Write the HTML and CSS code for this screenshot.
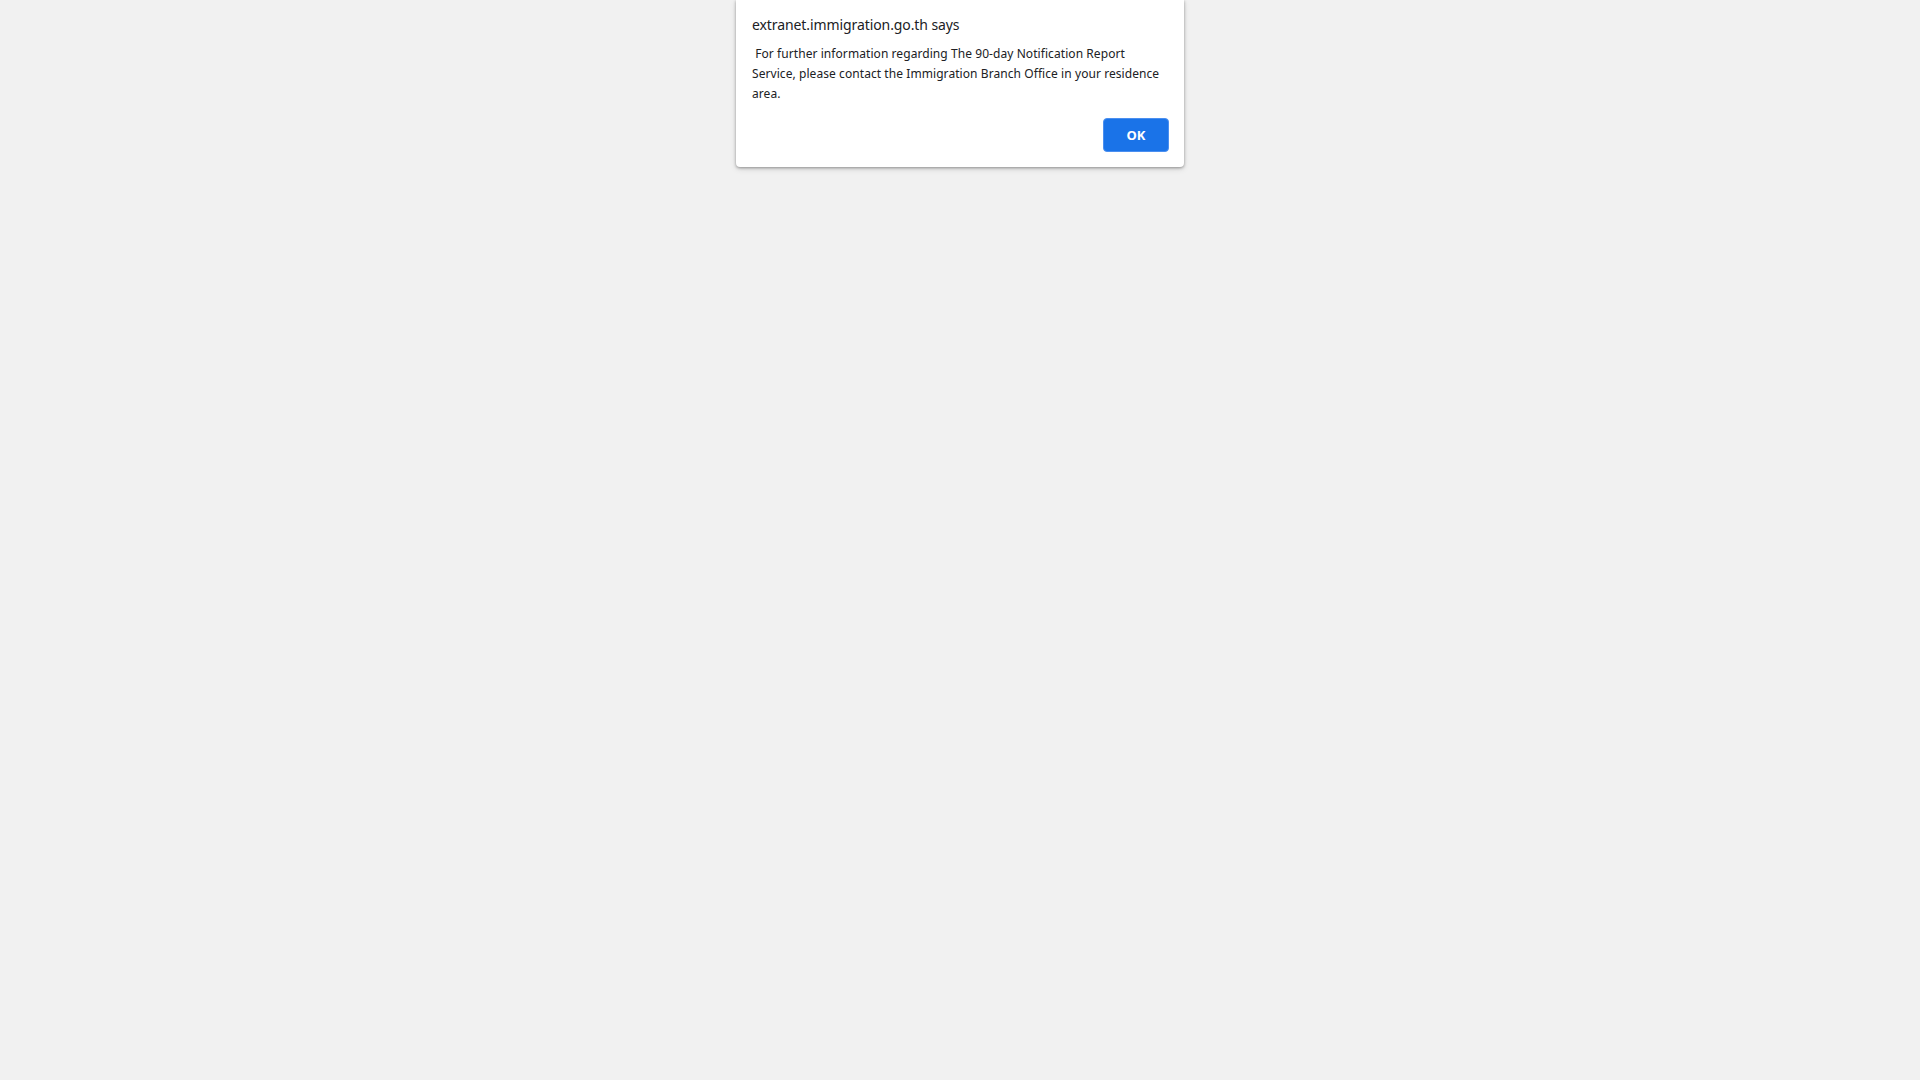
FILE: index.html
```html
<!DOCTYPE html>
<html lang="en">
<head>
<meta charset="utf-8">
<title>extranet.immigration.go.th</title>
<link rel="stylesheet" href="styles.css">
</head>
<body>
<div class="page">
  <div class="dialog" role="alertdialog">
    <div class="title">extranet.immigration.go.th says</div>
    <div class="message">&nbsp;For further information regarding The 90-day Notification Report<br>Service, please contact the Immigration Branch Office in your residence<br>area.</div>
    <div class="actions">
      <button class="ok" type="button">OK</button>
    </div>
  </div>
</div>
</body>
</html>
```

FILE: styles.css
```css
html, body {
  margin: 0;
  padding: 0;
  height: 100%;
  background: #f1f1f1;
}

.page {
  display: flex;
  justify-content: center;
  align-items: flex-start;
  height: 100%;
}

.dialog {
  width: 448px;
  box-sizing: border-box;
  background: #ffffff;
  border-radius: 0 0 4px 4px;
  box-shadow: 0 1px 3px rgba(0, 0, 0, 0.35), 0 2px 6px rgba(0, 0, 0, 0.12);
  padding: 15px 16px 15px 16px;
  font-family: "Noto Sans", "Open Sans", sans-serif;
  color: #202124;
}

.title {
  font-size: 14px;
  line-height: 20px;
  letter-spacing: -0.09px;
  margin-bottom: 9px;
}

.message {
  font-size: 12px;
  line-height: 20px;
  letter-spacing: 0.07px;
  color: #202124;
  white-space: nowrap;
}

.actions {
  display: flex;
  justify-content: flex-end;
  margin-top: 14px;
}

.ok {
  width: 66px;
  height: 34px;
  box-sizing: border-box;
  border: 1px solid #4a8ff0;
  border-radius: 4px;
  background: #1a73e8;
  color: #ffffff;
  font-family: "Noto Sans", "Open Sans", sans-serif;
  font-size: 13px;
  font-weight: 700;
  padding: 0;
  margin-right: -1px;
}
```
